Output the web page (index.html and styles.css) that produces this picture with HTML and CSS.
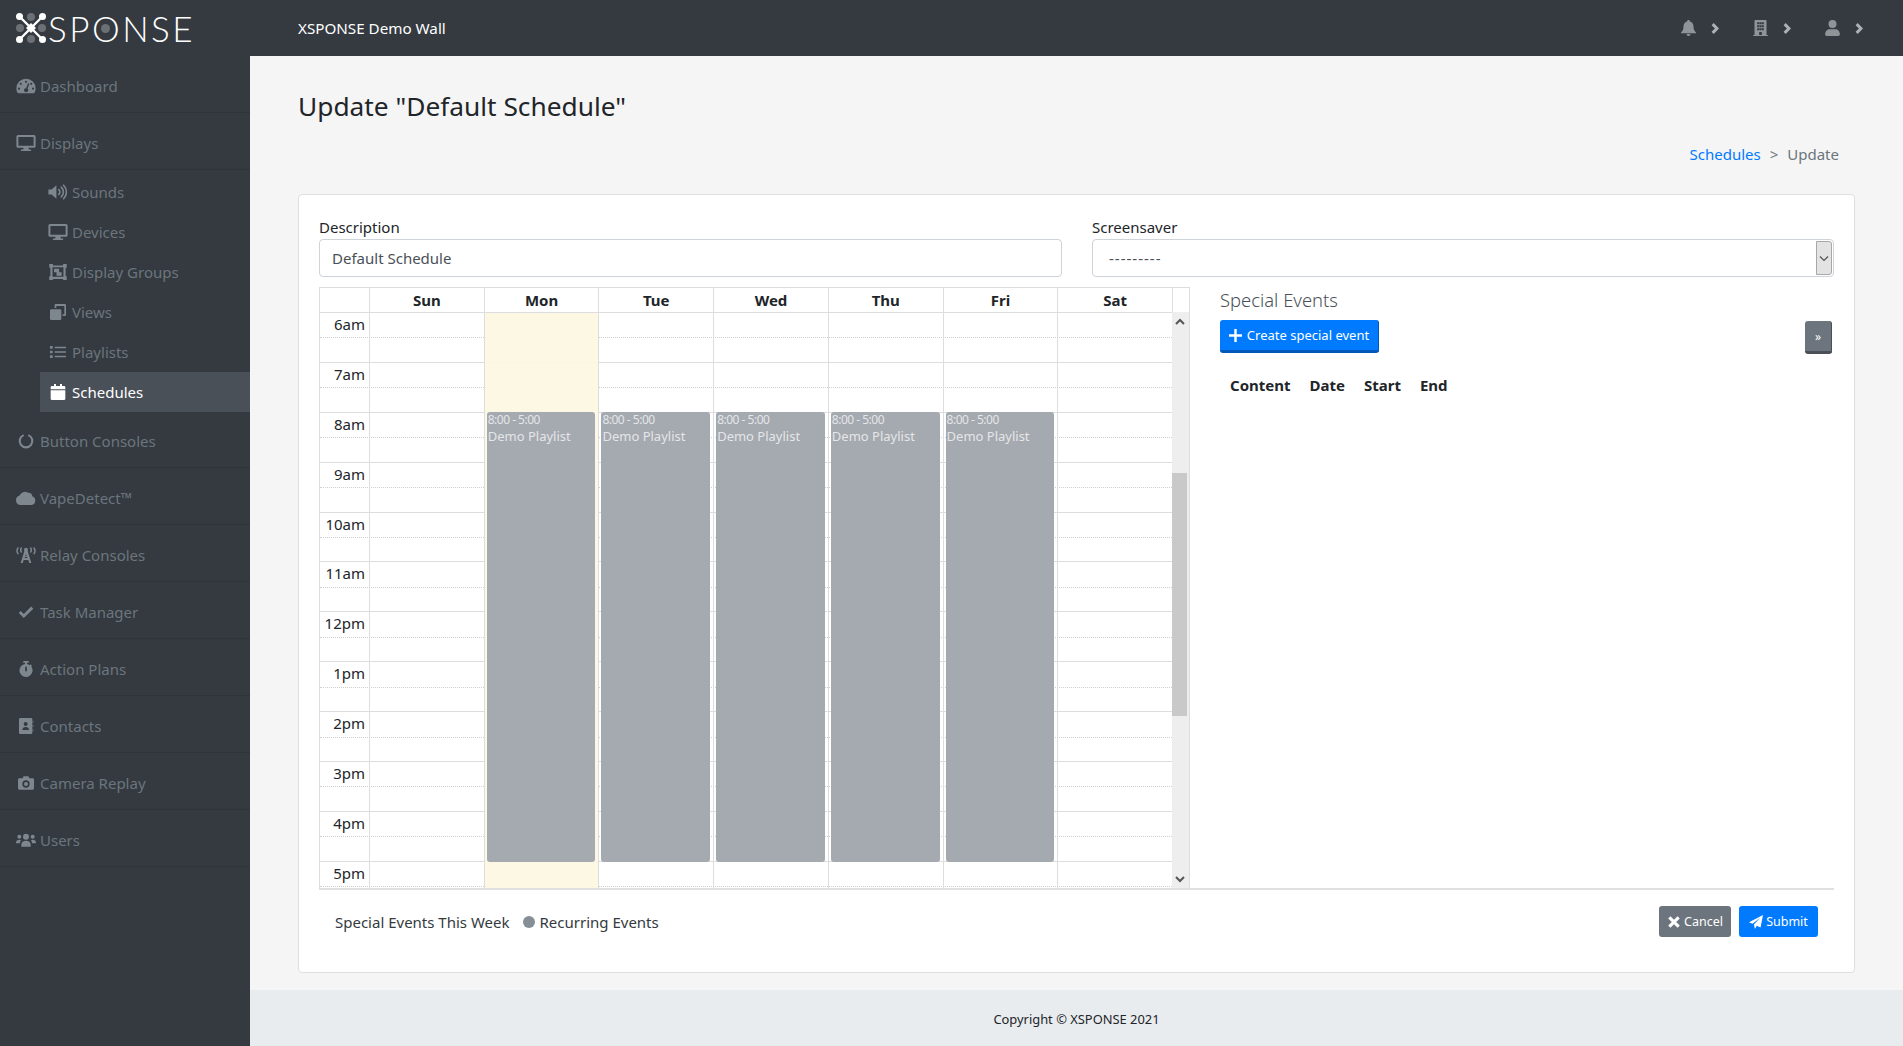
FILE: index.html
```html
<!DOCTYPE html>
<html lang="en">
<head>
    <meta charset="UTF-8">
    <title>XSPONSE Demo Wall</title>
    <link rel="stylesheet" href="styles.css">
</head>
<body>
    <svg class="icon-defs" width="0" height="0">
        <symbol id="i-dash" viewBox="0 0 24 20"><path fill-rule="evenodd" d="M12 1a12 12 0 0 1 12 12c0 2-.5 4-1.500 5.500a1 1 0 0 1-1 .5h-19a1 1 0 0 1-1-.5C.500 17 0 15 0 13A12 12 0 0 1 12 1zM12 3.500a1.300 1.300 0 1 0 0 2.600 1.300 1.300 0 0 0 0-2.600zM5.500 6a1.300 1.300 0 1 0 0 2.600 1.300 1.300 0 0 0 0-2.600zM3.200 12a1.300 1.300 0 1 0 0 2.600 1.300 1.300 0 0 0 0-2.600zM18.500 6a1.300 1.300 0 1 0 0 2.600 1.300 1.300 0 0 0 0-2.600zM20.800 12a1.300 1.300 0 1 0 0 2.600 1.300 1.300 0 0 0 0-2.600zM14.600 6.500l-2.500 6.200a2.500 2.500 0 1 0 1.800.7l2.300-6.300z"/></symbol>
        <symbol id="i-desktop" viewBox="0 0 24 20"><path fill-rule="evenodd" d="M2 0h20a2 2 0 0 1 2 2v12a2 2 0 0 1-2 2h-7l.6 2h2a1 1 0 0 1 0 2H6.400a1 1 0 0 1 0-2h2L9 16H2a2 2 0 0 1-2-2V2a2 2 0 0 1 2-2zm.5 2.500v11h19v-11z"/></symbol>
        <symbol id="i-sound" viewBox="0 0 24 20"><path d="M0 7h4l6-5.500v17L4 13H0z"/><path fill="none" stroke="currentColor" stroke-width="2" stroke-linecap="round" d="M13 7a4 4 0 0 1 0 6M16 4a8 8 0 0 1 0 12M19 1.500a12 12 0 0 1 0 17"/></symbol>
        <symbol id="i-group" viewBox="0 0 24 22"><path fill-rule="evenodd" d="M0 0h5v2h14V0h5v5h-1.500v12H24v5h-5v-1.500H5V22H0v-5h1.500V5H0zM4.500 4.500v13h15v-13z"/><path d="M6.500 6.500h7v5h3.500v4.500h-7v-4.500h-3.500z"/></symbol>
        <symbol id="i-clone" viewBox="0 0 24 24"><path d="M2 8h13a2 2 0 0 1 2 2v12a2 2 0 0 1-2 2H2a2 2 0 0 1-2-2V10a2 2 0 0 1 2-2z"/><path d="M8 0h14a2 2 0 0 1 2 2v14a2 2 0 0 1-2 2h-3v-2.500h2.500V3H9.500v3H7V1a1 1 0 0 1 1-1z"/></symbol>
        <symbol id="i-list" viewBox="-3 -2 30 24"><path d="M0 1h4v4H0zM0 8h4v4H0zM0 15h4v4H0zM7 2h17v2.400H7zM7 8.800h17v2.400H7zM7 15.600h17V18H7z"/></symbol>
        <symbol id="i-calendar" viewBox="0 0 22 24"><path d="M5 0h3v3h6V0h3v3h3a2 2 0 0 1 2 2v3H0V5a2 2 0 0 1 2-2h3zM0 9.500h22V22a2 2 0 0 1-2 2H2a2 2 0 0 1-2-2z"/></symbol>
        <symbol id="i-notch" viewBox="0 0 24 24"><path fill="none" stroke="currentColor" stroke-width="3.200" d="M15.500 3.200a9.500 9.500 0 1 1-7 0"/></symbol>
        <symbol id="i-cloud" viewBox="0 0 30 21"><path d="M7 21a7 7 0 0 1-2-13.700A9 9 0 0 1 18 2.500a6 6 0 0 1 6.500 5.500A6.800 6.800 0 0 1 23.500 21z"/></symbol>
        <symbol id="i-tower" viewBox="0 0 30 24"><path d="M13 4.500h4l6 19.500h-3.200l-1.300-4.500h-7L10.200 24H7zM14 14h2l-1-3.500zM13 16.500h4l-.5-1.500h-3z"/><circle cx="15" cy="4" r="3"/><path fill="none" stroke="currentColor" stroke-width="2.200" stroke-linecap="round" d="M3 1.500Q0 5.500 3 10M8 1.500Q6 4.500 8 7.500M27 1.500Q30 5.500 27 10M22 1.500Q24 4.500 22 7.500"/></symbol>
        <symbol id="i-check" viewBox="-4 -3 32 24"><path fill="none" stroke="currentColor" stroke-width="4.600" d="M2 9l6.500 6.500L22 2"/></symbol>
        <symbol id="i-watch" viewBox="0 0 20 24"><path fill-rule="evenodd" d="M6 0h8v2.500h-2.500v2a10 10 0 0 1 4.400 1.700L17 5l2 2-1.200 1.200A9.800 9.800 0 1 1 8.500 4.500v-2H6zM8.800 8.500v7h2.500v-7z"/></symbol>
        <symbol id="i-contact" viewBox="0 0 22 24"><path fill-rule="evenodd" d="M2.500 0h16A2 2 0 0 1 20.500 2v20a2 2 0 0 1-2 2h-16a2 2 0 0 1-2-2V2a2 2 0 0 1 2-2zm8 6a3 3 0 1 0 0 6 3 3 0 0 0 0-6zM5.500 18h10c0-3-2-4.500-5-4.500s-5 1.500-5 4.500z"/><path d="M21 4h1v3h-1zM21 10.500h1v3h-1zM21 17h1v3h-1z"/></symbol>
        <symbol id="i-camera" viewBox="-3 -2 30 24"><path fill-rule="evenodd" d="M2 3h5l1.300-3h7.400L17 3h5a2 2 0 0 1 2 2v13a2 2 0 0 1-2 2H2a2 2 0 0 1-2-2V5a2 2 0 0 1 2-2zm10 3a5.500 5.500 0 1 0 0 11 5.500 5.500 0 0 0 0-11zm0 2.500a3 3 0 1 1 0 6 3 3 0 0 1 0-6z"/></symbol>
        <symbol id="i-users" viewBox="0 0 30 20"><circle cx="15" cy="5" r="4.500"/><circle cx="5" cy="5" r="3"/><circle cx="25" cy="5" r="3"/><path d="M8 20v-3c0-4 3-6 7-6s7 2 7 6v3zM0 14c0-3 2-4.500 5-4.500 1 0 2 .3 2.500 .8C6.500 11.500 6 13 6 15H1a1 1 0 0 1-1-1zM30 14c0-3-2-4.500-5-4.500-1 0-2 .3-2.500 .8 1 1.200 1.500 2.700 1.500 4.700h5a1 1 0 0 0 1-1z"/></symbol>
        <symbol id="i-bell" viewBox="0 0 22 24"><path d="M11 0a1.800 1.800 0 0 1 1.800 2.300C16.500 3 18.500 6 18.500 9.500c0 5 1.500 7 3 8.500a1 1 0 0 1-.8 2H1.300a1 1 0 0 1-.8-2c1.500-1.500 3-3.500 3-8.500 0-3.500 2-6.500 5.700-7.200A1.800 1.800 0 0 1 11 0zM8 21h6a3 3 0 0 1-6 0z"/></symbol>
        <symbol id="i-building" viewBox="0 0 22 24"><path fill-rule="evenodd" d="M3 0h16a1 1 0 0 1 1 1v21.500h2V24H0v-1.500h2V1a1 1 0 0 1 1-1zm3 3.500v3h3v-3zm3.500 0v3h3v-3zM13 3.500v3h3v-3zM6 8v3h3V8zm3.500 0v3h3V8zM13 8v3h3V8zM6 12.500v3h3v-3zm3.500 0v3h3v-3zm3.500 0v3h3v-3zM9 18v4.500h4V18z"/></symbol>
        <symbol id="i-user" viewBox="0 0 22 24"><circle cx="11" cy="6" r="6"/><path d="M0 21.500C0 17 3 14 7 14h8c4 0 7 3 7 7.500a2.500 2.500 0 0 1-2.500 2.500h-17A2.500 2.500 0 0 1 0 21.500z"/></symbol>
        <symbol id="i-chevron" viewBox="0 0 12 16"><path fill="none" stroke="currentColor" stroke-width="4.500" d="M2.500 1.500L9 8l-6.500 6.500"/></symbol>
        <symbol id="i-plus" viewBox="0 0 16 16"><path d="M6.500 0h3v6.500H16v3H9.500V16h-3V9.500H0v-3h6.500z"/></symbol>
        <symbol id="i-times" viewBox="-1 -1 18 18"><path fill="none" stroke="currentColor" stroke-width="4" d="M2 2l12 12M14 2L2 14"/></symbol>
        <symbol id="i-plane" viewBox="0 0 20 20"><path d="M20 0L16.500 18 11 15.500 8.500 20 7 13.500 16 4 5 12.500 0 10.500z"/></symbol>
        <symbol id="i-up" viewBox="0 0 10 7"><path fill="none" stroke="currentColor" stroke-width="2" d="M1 6l4-4 4 4"/></symbol>
        <symbol id="i-down" viewBox="0 0 10 7"><path fill="none" stroke="currentColor" stroke-width="2" d="M1 1l4 4 4-4"/></symbol>
        <symbol id="i-caret" viewBox="0 0 10 7"><path fill="none" stroke="currentColor" stroke-width="1.200" d="M1 1.500l4 4 4-4"/></symbol>
    </svg>

    <div class="app">
        <!-- Top bar -->
        <header class="topbar">
            <div class="brand">
                <svg class="brand-mark" viewBox="0 0 30 30">
                    <g fill="#6b7075">
                        <circle cx="15" cy="4" r="4"/><circle cx="15" cy="26" r="4"/>
                        <circle cx="4" cy="15" r="4"/><circle cx="26" cy="15" r="4"/>
                    </g>
                    <path d="M4 4L26 26M26 4L4 26" stroke="#fff" stroke-width="2.400"/>
                    <path d="M15 10l5 5-5 5-5-5z" fill="#fff"/>
                    <g fill="#fff">
                        <circle cx="3.500" cy="3.500" r="3.500"/><circle cx="26.500" cy="3.500" r="3.500"/>
                        <circle cx="3.500" cy="26.500" r="3.500"/><circle cx="26.500" cy="26.500" r="3.500"/>
                    </g>
                </svg>
                <span class="brand-name">SP<span class="brand-o">O</span>NSE</span>
            </div>
            <div class="topbar-title">XSPONSE Demo Wall</div>
            <div class="topbar-tools">
                <span class="tool"><svg class="tool-icon"><use href="#i-bell"/></svg><svg class="tool-arrow"><use href="#i-chevron"/></svg></span>
                <span class="tool"><svg class="tool-icon"><use href="#i-building"/></svg><svg class="tool-arrow"><use href="#i-chevron"/></svg></span>
                <span class="tool"><svg class="tool-icon"><use href="#i-user"/></svg><svg class="tool-arrow"><use href="#i-chevron"/></svg></span>
            </div>
        </header>

        <!-- Sidebar -->
        <nav class="sidebar">
            <a class="nav-item"><svg class="nav-icon"><use href="#i-dash"/></svg>Dashboard</a>
            <a class="nav-item"><svg class="nav-icon"><use href="#i-desktop"/></svg>Displays</a>
            <div class="subnav">
                <a class="sub-item"><svg class="nav-icon"><use href="#i-sound"/></svg>Sounds</a>
                <a class="sub-item"><svg class="nav-icon"><use href="#i-desktop"/></svg>Devices</a>
                <a class="sub-item"><svg class="nav-icon"><use href="#i-group"/></svg>Display Groups</a>
                <a class="sub-item"><svg class="nav-icon"><use href="#i-clone"/></svg>Views</a>
                <a class="sub-item"><svg class="nav-icon"><use href="#i-list"/></svg>Playlists</a>
                <a class="sub-item active"><svg class="nav-icon"><use href="#i-calendar"/></svg>Schedules</a>
            </div>
            <a class="nav-item nav-short"><svg class="nav-icon"><use href="#i-notch"/></svg>Button Consoles</a>
            <a class="nav-item"><svg class="nav-icon"><use href="#i-cloud"/></svg>VapeDetect™</a>
            <a class="nav-item"><svg class="nav-icon"><use href="#i-tower"/></svg>Relay Consoles</a>
            <a class="nav-item"><svg class="nav-icon"><use href="#i-check"/></svg>Task Manager</a>
            <a class="nav-item"><svg class="nav-icon"><use href="#i-watch"/></svg>Action Plans</a>
            <a class="nav-item"><svg class="nav-icon"><use href="#i-contact"/></svg>Contacts</a>
            <a class="nav-item"><svg class="nav-icon"><use href="#i-camera"/></svg>Camera Replay</a>
            <a class="nav-item"><svg class="nav-icon"><use href="#i-users"/></svg>Users</a>
        </nav>

        <!-- Content -->
        <main class="content">
            <div class="page">
                <h1 class="page-title">Update "Default Schedule"</h1>
                <div class="breadcrumb"><a class="crumb-link">Schedules</a><span class="crumb-sep">&gt;</span><span>Update</span></div>

                <section class="card">
                    <form class="form-row">
                        <div>
                            <label for="description">Description</label>
                            <input class="field" type="text" id="description" value="Default Schedule">
                        </div>
                        <div>
                            <label for="screensaver">Screensaver</label>
                            <div class="select-box">
                                <select id="screensaver"><option>---------</option></select>
                                <span class="select-btn"><svg class="select-arrow"><use href="#i-caret"/></svg></span>
                            </div>
                        </div>
                    </form>

                    <div class="schedule">
                        <div class="calendar">
                            <div class="cal-head">
                                <div></div><div>Sun</div><div>Mon</div><div>Tue</div><div>Wed</div><div>Thu</div><div>Fri</div><div>Sat</div><div></div>
                            </div>
                            <div class="cal-body">
                                <div class="cal-grid">
                                    <div class="cal-row">6am</div>
                                    <div class="cal-row">7am</div>
                                    <div class="cal-row">8am</div>
                                    <div class="cal-row">9am</div>
                                    <div class="cal-row">10am</div>
                                    <div class="cal-row">11am</div>
                                    <div class="cal-row">12pm</div>
                                    <div class="cal-row">1pm</div>
                                    <div class="cal-row">2pm</div>
                                    <div class="cal-row">3pm</div>
                                    <div class="cal-row">4pm</div>
                                    <div class="cal-row">5pm</div>
                                    <div class="cal-days">
                                        <div class="cal-day"></div>
                                        <div class="cal-day today"><div class="event"><span class="event-time">8:00 - 5:00</span>Demo Playlist</div></div>
                                        <div class="cal-day"><div class="event"><span class="event-time">8:00 - 5:00</span>Demo Playlist</div></div>
                                        <div class="cal-day"><div class="event"><span class="event-time">8:00 - 5:00</span>Demo Playlist</div></div>
                                        <div class="cal-day"><div class="event"><span class="event-time">8:00 - 5:00</span>Demo Playlist</div></div>
                                        <div class="cal-day"><div class="event"><span class="event-time">8:00 - 5:00</span>Demo Playlist</div></div>
                                        <div class="cal-day"></div>
                                    </div>
                                </div>
                                <div class="scrollbar">
                                    <svg class="scroll-up"><use href="#i-up"/></svg>
                                    <div class="scroll-thumb"></div>
                                    <svg class="scroll-down"><use href="#i-down"/></svg>
                                </div>
                            </div>
                        </div>

                        <aside class="events">
                            <div class="events-main">
                                <h2 class="events-title">Special Events</h2>
                                <button class="btn btn-primary btn-create" type="button"><svg class="btn-icon"><use href="#i-plus"/></svg>Create special event</button>
                                <div class="events-head"><span>Content</span><span>Date</span><span>Start</span><span>End</span></div>
                            </div>
                            <button class="btn btn-secondary btn-more" type="button">»</button>
                        </aside>
                    </div>

                    <div class="card-foot">
                        <div class="legend">
                            <span>Special Events This Week</span>
                            <span class="legend-dot"></span>
                            <span>Recurring Events</span>
                        </div>
                        <div class="actions">
                            <button class="btn btn-gray" type="button"><svg class="btn-icon-sm"><use href="#i-times"/></svg>Cancel</button>
                            <button class="btn btn-blue" type="button"><svg class="btn-icon-sm"><use href="#i-plane"/></svg>Submit</button>
                        </div>
                    </div>
                </section>
            </div>
            <footer class="footer">Copyright © XSPONSE 2021</footer>
        </main>
    </div>
</body>
</html>
```

FILE: styles.css
```css
* {
    box-sizing: border-box;
}
html, body {
    height: 100%;
}
body {
    margin: 0;
    font-family: "Noto Sans", "Open Sans", sans-serif;
    font-size: 15px;
    color: #212529;
    background-color: #f5f5f5;
    overflow: hidden;
}
.icon-defs {
    position: absolute;
}
svg {
    fill: currentColor;
}

.app {
    display: grid;
    grid-template-columns: 250px 1fr;
    grid-template-rows: 56px 1fr;
    height: 1046px;
}

/* Top bar */
.topbar {
    grid-column: 1 / 3;
    display: flex;
    align-items: center;
    background-color: #343a40;
    color: #fff;
}
.brand {
    width: 298px;
    display: flex;
    align-items: center;
    padding-left: 16px;
}
.brand-mark {
    width: 30px;
    height: 30px;
}
.brand-name {
    font-family: Lato, sans-serif;
    font-weight: 300;
    font-size: 35px;
    line-height: 30px;
    margin-left: 2px;
    letter-spacing: 2.500px;
}
.brand-o {
    position: relative;
}
.brand-o::after {
    content: "";
    position: absolute;
    left: 50%;
    top: 50%;
    width: 9px;
    height: 9px;
    margin: -4px 0 0 -6px;
    border-radius: 50%;
    background-color: #6b7075;
}
.topbar-title {
    flex: 1;
    font-size: 15.200px;
}
.topbar-tools {
    display: flex;
    padding-right: 40px;
    color: #8f9499;
}
.tool {
    display: flex;
    align-items: center;
    width: 72px;
    justify-content: flex-end;
}
.tool-icon {
    width: 15px;
    height: 16px;
}
.tool-arrow {
    width: 8px;
    height: 11px;
    margin-left: 15px;
    color: #adb1b5;
}

/* Sidebar */
.sidebar {
    background-color: #343a40;
    color: #6c757d;
}
.nav-item {
    display: flex;
    align-items: center;
    height: 57px;
    padding: 3px 0 0 16px;
    border-bottom: 1px solid #2f343a;
}
.nav-short {
    height: 56px;
}
.subnav {
    padding: 2px 0 0 40px;
}
.sub-item {
    display: flex;
    align-items: center;
    height: 40px;
    padding-left: 8px;
}
.sub-item.active {
    background-color: #495057;
    color: #fff;
}
.nav-icon {
    width: 20px;
    height: 16px;
    margin-right: 4px;
    flex: none;
    color: #7f878e;
}
.active .nav-icon {
    color: #fff;
}

/* Content */
.content {
    display: flex;
    flex-direction: column;
    min-width: 0;
}
.page {
    flex: 1;
    padding: 0 48px;
}
.page-title {
    margin: 32px 0 0;
    font-size: 26.300px;
    line-height: 36px;
    font-weight: 400;
}
.breadcrumb {
    display: flex;
    justify-content: flex-end;
    margin-top: 18px;
    padding-right: 16px;
    color: #6c757d;
    line-height: 24px;
}
.crumb-link {
    color: #007bff;
}
.crumb-sep {
    margin: 0 9px;
}

.card {
    margin-top: 28px;
    height: 779px;
    padding: 20px 20px 0;
    background-color: #fff;
    border: 1px solid #dfdfdf;
    border-radius: 4px;
}
.form-row {
    display: grid;
    grid-template-columns: 743px 1fr;
    gap: 30px;
}
label {
    display: block;
    height: 24px;
    line-height: 24px;
}
.field, .select-box {
    width: 100%;
    height: 38px;
    border: 1px solid #ced4da;
    border-radius: 4px;
    background-color: #fff;
}
.field {
    padding: 0 12px;
    font: inherit;
    color: #495057;
}
.select-box {
    display: flex;
    padding: 1px;
}
.select-box select {
    flex: 1;
    border: none;
    background: none;
    appearance: none;
    padding: 0 15px;
    font: inherit;
    letter-spacing: 1px;
    color: #495057;
}
.select-btn {
    width: 16px;
    display: flex;
    align-items: center;
    justify-content: center;
    background-color: #e3e3e3;
    border: 1px solid #a8a8a8;
    border-radius: 0 3px 3px 0;
}
.select-arrow {
    width: 10px;
    height: 7px;
    color: #555;
}

/* Calendar */
.schedule {
    display: flex;
    margin-top: 10px;
    height: 603px;
    border-bottom: 2px solid #e0e0e0;
}
.calendar {
    width: 871px;
    flex: none;
    border: 1px solid #ddd;
    border-width: 1px 1px 0;
}
.cal-head {
    display: grid;
    grid-template-columns: 49px repeat(7, 1fr) 17px;
    height: 24px;
    font-weight: 700;
    text-align: center;
    line-height: 24px;
}
.cal-head div + div {
    border-left: 1px solid #ddd;
}
.cal-body {
    display: flex;
    height: 576px;
    overflow: hidden;
}
.cal-grid {
    position: relative;
    flex: 1;
}
.cal-row {
    position: relative;
    display: grid;
    grid-template-columns: 45px 1fr;
    height: 49.900px;
    border-top: 1px solid #ddd;
    line-height: 23px;
    text-align: right;
}
.cal-row::after {
    content: "";
    position: absolute;
    left: 0;
    right: 0;
    top: 50%;
    border-top: 1px dotted #d0d0d0;
}
.cal-days {
    position: absolute;
    top: 0;
    right: 0;
    bottom: 0;
    left: 49px;
    display: grid;
    grid-template-columns: repeat(7, 1fr);
}
.cal-day {
    position: relative;
    border-left: 1px solid #ddd;
}
.today::before {
    content: "";
    position: absolute;
    top: 1px;
    right: 0;
    bottom: 0;
    left: 0;
    background-color: #fcf7e2;
    opacity: 0.93;
}
.event {
    position: absolute;
    top: 100px;
    left: 2px;
    right: 3px;
    height: 450px;
    padding: 0 1px;
    background-color: #a5a9b0;
    border-radius: 3px;
    color: #e4e6e8;
    font-size: 13px;
    line-height: 18px;
}
.event-time {
    display: block;
    font-size: 12px;
    letter-spacing: -0.500px;
    line-height: 15px;
}
.scrollbar {
    position: relative;
    flex: none;
    width: 17px;
    background-color: #eee;
}
.scroll-up, .scroll-down {
    position: absolute;
    left: 3px;
    width: 10px;
    height: 7px;
    color: #555;
}
.scroll-up {
    top: 6px;
}
.scroll-down {
    bottom: 5px;
}
.scroll-thumb {
    position: absolute;
    top: 161px;
    left: 0;
    width: 15px;
    height: 243px;
    background-color: #c9c9c9;
}

/* Special events */
.events {
    flex: 1;
    display: flex;
    justify-content: space-between;
    align-items: flex-start;
    padding: 0 2px 0 30px;
}
.events-title {
    margin: 0 0 8px;
    font-size: 18.400px;
    font-weight: 300;
    line-height: 25px;
    color: #495057;
}
.btn {
    border: none;
    border-radius: 3px;
    color: #fff;
    font-family: inherit;
    display: inline-flex;
    align-items: center;
    justify-content: center;
    cursor: pointer;
}
.btn-create {
    width: 159px;
    height: 33px;
    font-size: 13px;
    background-color: #007bff;
    border-bottom: 3px solid #0059b8;
    border-right: 1px solid #0059b8;
}
.btn-icon {
    width: 13px;
    height: 13px;
    margin-right: 5px;
}
.events-head {
    display: flex;
    gap: 19px;
    margin-top: 22px;
    padding-left: 10px;
    font-weight: 700;
}
.btn-more {
    margin-top: 34px;
    width: 27px;
    height: 33px;
    font-size: 12px;
    background-color: #6c757d;
    border-bottom: 3px solid #4a5056;
    border-right: 1px solid #4a5056;
}

/* Card footer */
.card-foot {
    display: flex;
    justify-content: space-between;
    padding: 16px 16px 0;
}
.legend {
    display: flex;
    align-items: center;
    color: #343a40;
}
.legend-dot {
    width: 12px;
    height: 12px;
    margin: 0 5px 0 13px;
    border-radius: 50%;
    background-color: #868e96;
}
.actions {
    display: flex;
    gap: 8px;
}
.actions .btn {
    height: 31px;
    font-size: 12.500px;
    padding: 0;
}
.btn-gray {
    background-color: #6c757d;
    width: 72px;
}
.btn-blue {
    background-color: #007bff;
    width: 79px;
}
.btn-icon-sm {
    width: 14px;
    height: 14px;
    margin-right: 3px;
}

.footer {
    height: 56px;
    margin-top: 17px;
    background-color: #e9ecef;
    text-align: center;
    font-size: 12.900px;
    line-height: 58px;
}
```
